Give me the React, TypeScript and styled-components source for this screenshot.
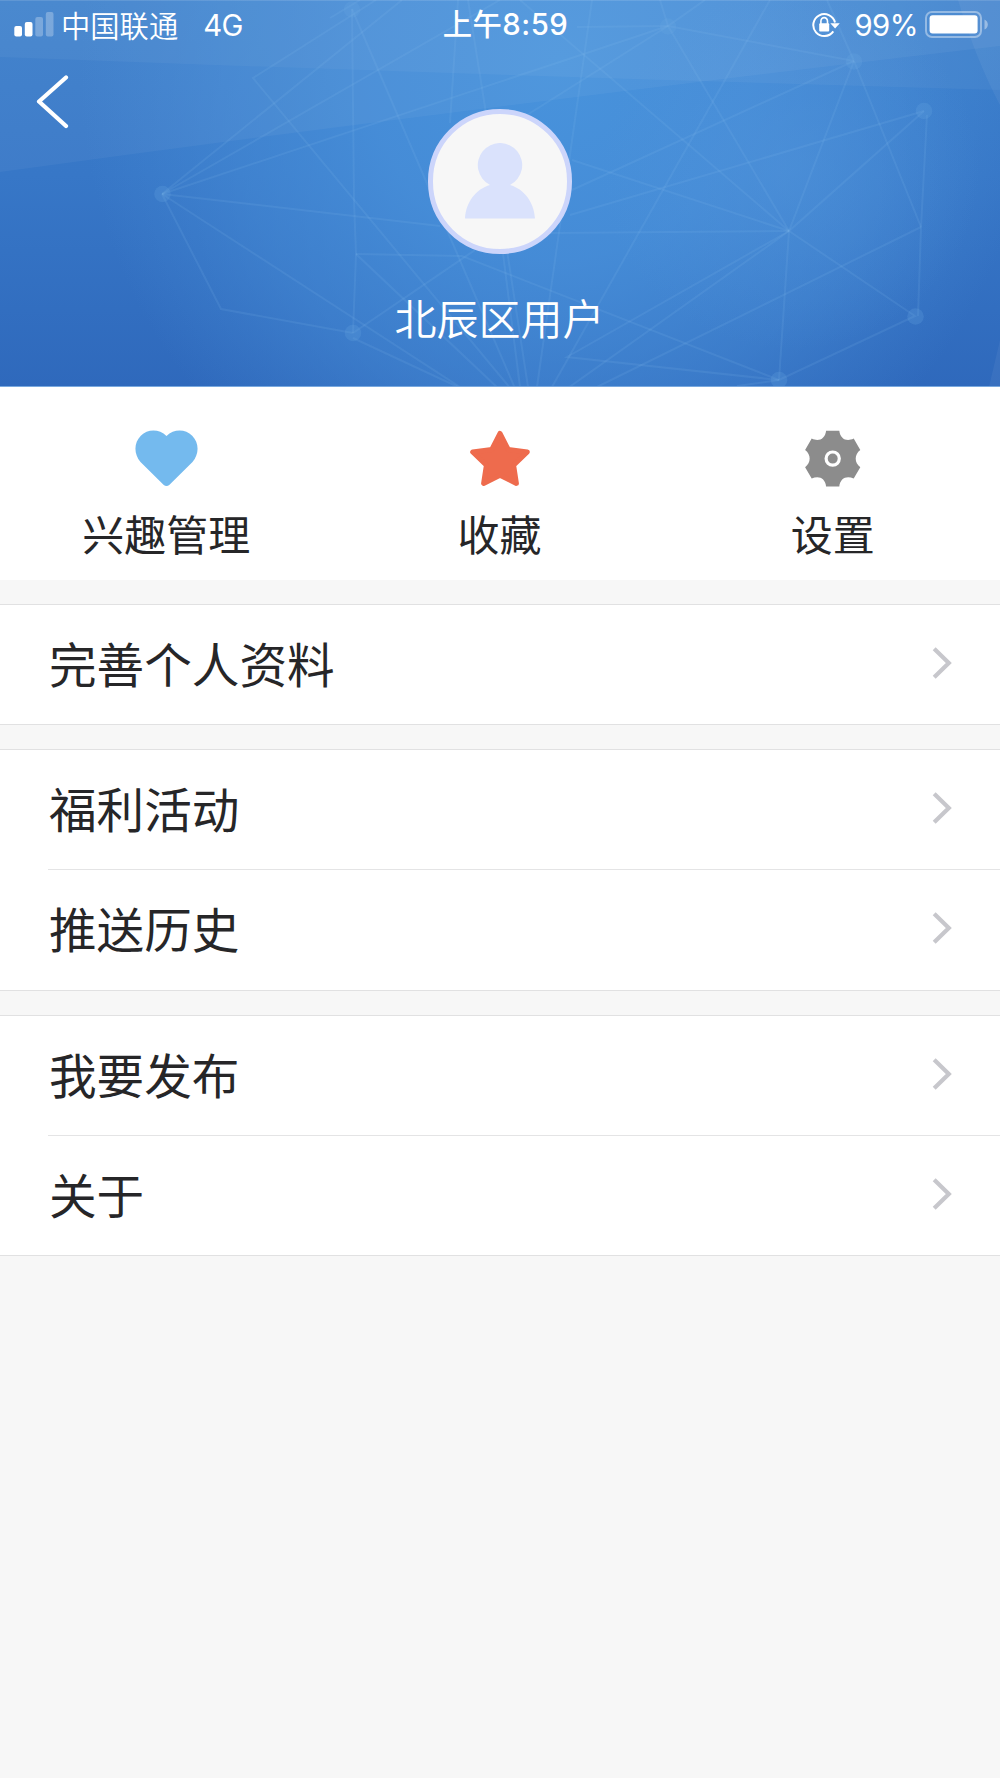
import React from "react";
import styled, { createGlobalStyle } from "styled-components";

const GlobalStyle = createGlobalStyle`
  *, *::before, *::after { box-sizing: border-box; }
  html, body { margin: 0; padding: 0; background: #f7f7f7; }
  body {
    font-family: Inter, "Noto Sans CJK SC", sans-serif;
    color: #262628;
    -webkit-font-smoothing: antialiased;
  }
`;

const Screen = styled.main`
  display: flex;
  flex-direction: column;
  width: 1000px;
  min-height: 1778px;
  background: #f7f7f7;
`;

const Header = styled.header`
  position: relative;
  display: flex;
  flex-direction: column;
  height: 387px;
  overflow: hidden;
  background: #3a7ccb;
  color: #fff;
`;

const Backdrop = styled.svg`
  position: absolute;
  inset: 0;
  display: block;
`;

const StatusBar = styled.div`
  position: relative;
  display: grid;
  grid-template-columns: 1fr auto 1fr;
  align-items: center;
  height: 48px;
  padding: 0 12px 0 14px;
  font-size: 29.3px;
  line-height: 48px;
`;

const StatusSide = styled.div<{ $end?: boolean }>`
  display: flex;
  align-items: center;
  height: 48px;
  justify-content: ${(p) => (p.$end ? "flex-end" : "flex-start")};
`;

const Carrier = styled.span`
  margin-left: 7px;
  padding-bottom: 2px;
  font-family: "Noto Sans CJK SC", sans-serif;
  font-weight: 350;
`;

const Network = styled.span`
  margin-left: 25px;
  padding-top: 2px;
  letter-spacing: -0.6px;
`;

const Clock = styled.time`
  padding: 1px 0 0 9px;
  font-weight: 500;
  letter-spacing: 0.5px;
`;

const Percent = styled.span`
  padding-top: 2px;
  margin: 0 7px 0 14px;
  letter-spacing: -0.5px;
`;

const NavBar = styled.nav`
  position: relative;
  height: 61px;
  padding: 27px 0 0 36px;
`;

const BackButton = styled.button`
  display: block;
  padding: 0;
  border: 0;
  background: none;
  line-height: 0;
`;

const Profile = styled.div`
  position: relative;
  display: flex;
  flex-direction: column;
  align-items: center;
`;

const Avatar = styled.div`
  display: flex;
  justify-content: center;
  width: 144.6px;
  height: 144.6px;
  padding-top: 29.4px;
  border: 5px solid #ccd5fb;
  border-radius: 50%;
  background: #f7f7f7;
`;

const UserName = styled.h1`
  margin: 33px 0 0;
  padding-right: 1px;
  font-family: "Noto Sans CJK SC", sans-serif;
  font-size: 42px;
  font-weight: 350;
  line-height: 60px;
`;

const Shortcuts = styled.section`
  display: grid;
  grid-template-columns: repeat(3, 1fr);
  height: 193px;
  padding-top: 43px;
  background: #fff;
`;

const Shortcut = styled.a`
  display: flex;
  flex-direction: column;
  align-items: center;
  gap: 15px;
`;

const ShortcutLabel = styled.span`
  padding-right: 1px;
  font-family: "Noto Sans CJK SC", sans-serif;
  font-size: 42px;
  font-weight: 400;
  line-height: 60px;
`;

const Group = styled.section`
  margin-top: 24px;
  border-top: 1px solid #e1e1e2;
  border-bottom: 1px solid #e1e1e2;
  background: #fff;
`;

const Row = styled.div`
  display: flex;
  align-items: center;
  justify-content: space-between;
  height: 119.2px;
  margin-left: 48px;
  padding: 0 48px 3px 1px;

  & + & {
    height: 120.2px;
    border-top: 1px solid #e4e4e5;
  }
`;

const RowLabel = styled.span`
  font-family: "Noto Sans CJK SC", sans-serif;
  font-size: 47.6px;
  font-weight: 400;
  line-height: 70px;
`;

type Point = [number, number];

const strands: Point[][] = [
  [[376, 0], [253, 78], [520, 400]],
  [[162, 194], [402, 0]],
  [[162, 194], [500, 0]],
  [[162, 194], [668, 26]],
  [[162, 194], [440, 226]],
  [[162, 194], [480, 400]],
  [[162, 194], [221, 309], [353, 333]],
  [[352, 9], [354, 200], [356, 254], [353, 333]],
  [[352, 9], [520, 400]],
  [[330, 18], [360, 0]],
  [[356, 254], [462, 256], [779, 380]],
  [[356, 254], [500, 390]],
  [[353, 333], [475, 250]],
  [[353, 338], [458, 387]],
  [[458, 0], [450, 123]],
  [[468, 0], [485, 107], [528, 387]],
  [[500, 230], [520, 387]],
  [[592, 0], [537, 387]],
  [[770, 0], [552, 387]],
  [[668, 26], [577, 27]],
  [[668, 26], [660, 0]],
  [[668, 26], [705, 0]],
  [[668, 26], [527, 115]],
  [[668, 26], [854, 61]],
  [[827, 0], [854, 61]],
  [[854, 61], [572, 190]],
  [[854, 61], [789, 231]],
  [[854, 61], [921, 227]],
  [[924, 111], [570, 215]],
  [[924, 111], [789, 231]],
  [[927, 115], [921, 227], [918, 316]],
  [[789, 231], [520, 0]],
  [[789, 231], [668, 26]],
  [[789, 231], [572, 160]],
  [[789, 231], [550, 233]],
  [[789, 231], [567, 357], [779, 380]],
  [[789, 231], [568, 388]],
  [[789, 231], [779, 380]],
  [[789, 231], [915, 316], [779, 380], [737, 386]],
  [[921, 227], [597, 387]],
];

const knots: Point[] = [
  [162.5, 194], [352, 9.5], [668, 26.5], [854, 61.5],
  [924, 111], [915.5, 316.5], [779, 380], [353, 333],
];

function HeaderBackdrop() {
  return (
    <Backdrop width="1000" height="387" viewBox="0 0 1000 387" aria-hidden>
      <defs>
        <linearGradient id="base" x1="0" y1="0" x2="0" y2="1">
          <stop offset="0" stopColor="#3b7fcb" />
          <stop offset="0.45" stopColor="#3777c7" />
          <stop offset="1" stopColor="#2f69bc" />
        </linearGradient>
        <radialGradient id="glow" gradientUnits="userSpaceOnUse" cx="0" cy="0" r="1" gradientTransform="translate(560 60) rotate(12) scale(480 500)">
          <stop offset="0" stopColor="#4893dc" />
          <stop offset="0.4" stopColor="#4890da" stopOpacity="0.84" />
          <stop offset="0.7" stopColor="#478dd7" stopOpacity="0.5" />
          <stop offset="1" stopColor="#468ad4" stopOpacity="0" />
        </radialGradient>
        <radialGradient id="haze" gradientUnits="userSpaceOnUse" cx="0" cy="0" r="1" gradientTransform="translate(790 170) scale(190 180)">
          <stop offset="0" stopColor="#5395db" stopOpacity="0.45" />
          <stop offset="1" stopColor="#5395db" stopOpacity="0" />
        </radialGradient>
      </defs>
      <rect width="1000" height="387" fill="url(#base)" />
      <rect width="1000" height="387" fill="url(#glow)" />
      <rect width="1000" height="387" fill="url(#haze)" />
      <path d="M0 0H1000V90Q500 76 0 57Z" fill="#fff" fillOpacity="0.04" />
      <path d="M0 0H1000V46Q500 104 0 172Z" fill="#fff" fillOpacity="0.045" />
      <path d="M958 0H1000V105Q976 60 958 0Z" fill="#fff" fillOpacity="0.05" />
      <path d="M1000 340V387H989Z" fill="#fff" fillOpacity="0.05" />
      <g fill="none" stroke="#8cc4f2" strokeOpacity="0.13" strokeWidth="2">
        {strands.map((points, i) => (
          <polyline key={i} points={points.map((p) => p.join(",")).join(" ")} />
        ))}
      </g>
      <g fill="#6aa8e2" fillOpacity="0.24">
        {knots.map(([x, y]) => (
          <circle key={x} cx={x} cy={y} r="8.3" />
        ))}
      </g>
      <path d="M0 0.5H1000" stroke="#fff" strokeOpacity="0.12" />
      <path d="M0 386.5H1000" stroke="#79a9df" />
    </Backdrop>
  );
}

const Signal = () => (
  <svg width="40" height="26" viewBox="0 0 40 26" fill="#fff">
    <rect x="0.3" y="14" width="7.7" height="10.5" rx="2" />
    <rect x="10.8" y="10" width="7.7" height="14.5" rx="2" />
    <rect x="21.3" y="5" width="7.7" height="19.5" rx="2" opacity="0.27" />
    <rect x="31.8" y="0" width="7.7" height="24.5" rx="2" opacity="0.27" />
  </svg>
);

const RotationLock = () => (
  <svg width="28" height="26" viewBox="0 0 28 26" fill="none">
    <path d="M21.300 19.400A11 11 0 1 1 23 10.500" stroke="#fff" strokeWidth="2" />
    <path d="M18.300 11.300H27.800L23.100 16.400Z" fill="#fff" />
    <rect x="7.200" y="11.300" width="10" height="8.200" rx="1" fill="#fff" />
    <path d="M8.900 12V9.200A3.300 3.600 0 0 1 15.500 9.200V12" stroke="#fff" strokeWidth="1.600" />
  </svg>
);

const Battery = () => (
  <svg width="63" height="27" viewBox="0 0 63 27" fill="none">
    <rect x="1" y="1" width="55" height="25" rx="6" stroke="#fff" strokeOpacity="0.4" strokeWidth="2" />
    <rect x="4.6" y="4.2" width="48" height="18.4" rx="3" fill="#fff" />
    <path d="M59.5 8.5Q62.8 10 62.8 13.5T59.5 18.5Z" fill="#fff" fillOpacity="0.4" />
  </svg>
);

const BackArrow = () => (
  <svg width="34" height="54" viewBox="0 0 34 54" fill="none">
    <path d="M30 2.5L3 26.5L30 51" stroke="#fff" strokeWidth="4.2" strokeLinecap="round" strokeLinejoin="round" />
  </svg>
);

const Person = () => (
  <svg width="70" height="76" viewBox="0 0 70 76" fill="#dae2fc">
    <path d="M25 42A22.2 22.2 0 1 1 45 42C59 46 69 59 70 75.5H0C1 59 11 46 25 42Z" />
  </svg>
);

const Heart = () => (
  <svg width="64" height="58" viewBox="0 0 64 58" fill="#74baee">
    <path d="M31.500 6C24 -1.300 12.500 -1 5.800 5.800C-1.300 13-1.300 24 5.500 32L28.500 54.700Q31.500 57.500 34.500 54.700L57.500 32C64.300 24 64.300 13 57.200 5.800C50.500-1 39-1.300 31.500 6Z" />
  </svg>
);

const Star = () => (
  <svg width="62" height="58" viewBox="0 0 62 58" fill="#ee6b4d" stroke="#ee6b4d" strokeWidth="5" strokeLinejoin="round">
    <path d="M31 3.400L39.200 19.400L58.300 22L44.600 35.200L47.400 53.400L31 45.200L14.600 53.400L17.400 35.200L3.700 22L22.800 19.400Z" />
  </svg>
);

const Gear = () => (
  <svg width="58" height="58" viewBox="0 0 58 58">
    <g transform="translate(28.700 28.600)">
      <path
        fill="#8c8c8c"
        d="M-6.600-27.800H6.600C7.500-19.500 14-16.500 21-20L27.600-8.600C21.500-4 21.500 4 27.600 8.600L21 20C14 16.500 7.500 19.500 6.600 27.800H-6.600C-7.500 19.500-14 16.500-21 20L-27.600 8.600C-21.500 4-21.500-4-27.600-8.600L-21-20C-14-16.500-7.500-19.500-6.600-27.800Z"
      />
      <circle r="6.600" fill="none" stroke="#fff" strokeWidth="3.200" />
    </g>
  </svg>
);

const Chevron = () => (
  <svg width="20" height="32" viewBox="0 0 20 32" fill="none">
    <path d="M2.200 1.800L16.800 16L2.200 30.200" stroke="#c7c7cc" strokeWidth="4.200" />
  </svg>
);

const shortcuts = [
  { label: "兴趣管理", Icon: Heart },
  { label: "收藏", Icon: Star },
  { label: "设置", Icon: Gear },
];

const groups = [["完善个人资料"], ["福利活动", "推送历史"], ["我要发布", "关于"]];

export default function App() {
  return (
    <>
      <GlobalStyle />
      <Screen>
        <Header>
          <HeaderBackdrop />
          <StatusBar>
            <StatusSide>
              <Signal />
              <Carrier>中国联通</Carrier>
              <Network>4G</Network>
            </StatusSide>
            <Clock>上午8:59</Clock>
            <StatusSide $end>
              <RotationLock />
              <Percent>99%</Percent>
              <Battery />
            </StatusSide>
          </StatusBar>
          <NavBar>
            <BackButton aria-label="返回">
              <BackArrow />
            </BackButton>
          </NavBar>
          <Profile>
            <Avatar>
              <Person />
            </Avatar>
            <UserName>北辰区用户</UserName>
          </Profile>
        </Header>
        <Shortcuts>
          {shortcuts.map(({ label, Icon }) => (
            <Shortcut key={label}>
              <Icon />
              <ShortcutLabel>{label}</ShortcutLabel>
            </Shortcut>
          ))}
        </Shortcuts>
        {groups.map((rows) => (
          <Group key={rows[0]}>
            {rows.map((label) => (
              <Row key={label}>
                <RowLabel>{label}</RowLabel>
                <Chevron />
              </Row>
            ))}
          </Group>
        ))}
      </Screen>
    </>
  );
}
